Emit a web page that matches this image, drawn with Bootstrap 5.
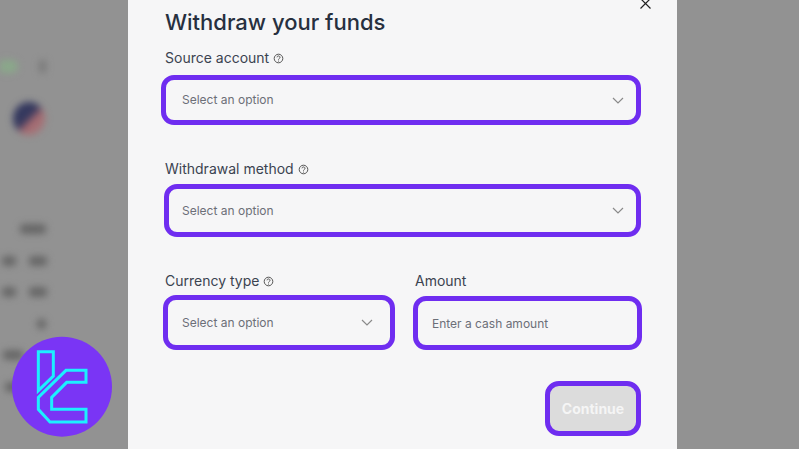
<!DOCTYPE html>
<html lang="en">
<head>
<meta charset="utf-8">
<title>Withdraw your funds</title>
<link href="https://cdn.jsdelivr.net/npm/bootstrap@5.3.0/dist/css/bootstrap.min.css" rel="stylesheet">
<style>
html,body{height:449px;overflow:hidden;margin:0}
body{background:#929292;font-family:Inter,"Liberation Sans",sans-serif}
.stage{height:449px;position:relative;overflow:hidden}
.behind{width:128px;flex:none;filter:blur(3.5px);padding-top:60px}
.smudge{height:10px;background:#676767;border-radius:4px;flex:none}
.srow{height:31.5px;padding-top:4px;display:flex}
.pill-g{width:18px;height:13px;background:#8aa88a;border-radius:0 7px 7px 0}
.pill-s{width:7px;height:13px;background:#7a7a7a;border-radius:3px;margin-left:21px}
.flag{width:32px;height:33px;border-radius:50%;margin:29px 0 85px 13px;background:linear-gradient(135deg,#34385e 45%,#a56a70 60%,#a57a7e)}
.w26{width:26px;margin-left:20px}.w15{width:14px;margin-left:2px}.w18{width:18px;margin-left:13px}.w10{width:9px;margin-left:37px}.w24{width:20px;margin-left:3px}.w16{width:16px;margin-left:5px}
.sheet{width:549px;flex:none;background:#f6f6f7;position:relative;padding:0 36px 0 33px;color:#2a3441}
.close-x{position:absolute;left:511px;top:-3px;width:13px;height:13px;background:none;border:0;padding:0}
.close-x svg{display:block}
.ttl{font-size:22px;font-weight:500;line-height:28px;margin:8px 0 0 4px;color:#27303f}
.lbl{font-size:14px;line-height:18px;color:#3b4350;display:flex;align-items:center;gap:4px;margin:0 0 0 4px;font-weight:400}
.lbl svg{display:block}
.src-lbl{margin-top:13px}
.wd-lbl{margin-top:35px}
.fbox{border:5px solid #6f2df0;border-radius:13px;background:#f6f6f7;color:#6c6f78;font-size:12px;display:flex;align-items:center;justify-content:space-between;box-shadow:none}
.fbox:focus{background:#f6f6f7;border-color:#6f2df0;box-shadow:none}
.fbox::placeholder{color:#6c6f78;opacity:1}
.f1{height:50px;padding:0 12px 0 16px;margin-top:8px}
.f2{height:53px;padding:0 12px 0 13px;margin:6px 0 0 3px}
.trio{display:grid;grid-template-columns:232px 229px;column-gap:18px;margin:35px 0 0 2px}
.trio .lbl{margin-left:2px}
.f3{height:55px;padding:0 17px 0 14px;margin-top:5px}
.f4{height:54px;padding:0 14px;margin-top:6px;width:229px}
.btn-wrap{display:flex;justify-content:flex-end;margin:31px 0 0}
.go{width:96px;height:55px;border:5px solid #6f2df0;border-radius:14px;background:#dcdcdc;color:#f5f5f5;font-size:14px;font-weight:700;padding:0}
.go:disabled{background:#dcdcdc;border-color:#6f2df0;color:#f5f5f5;opacity:1}
.badge-logo{position:absolute;left:0;top:320px;width:129px;height:129px}
</style>
</head>
<body>
<div class="stage d-flex">
  <div class="behind">
    <div class="d-flex align-items-center"><div class="pill-g"></div><div class="pill-s"></div></div>
    <div class="flag"></div>
    <div class="srow"><div class="smudge w26"></div></div>
    <div class="srow"><div class="smudge w15"></div><div class="smudge w18"></div></div>
    <div class="srow"><div class="smudge w15"></div><div class="smudge w18"></div></div>
    <div class="srow"><div class="smudge w10"></div></div>
    <div class="srow"><div class="smudge w24"></div></div>
    <div class="srow"><div class="smudge w16"></div></div>
  </div>
  <div class="sheet">
    <button class="close-x" type="button" aria-label="Close"><svg width="13" height="13" viewBox="0 0 13 13"><path d="M1.5 1.5 11.5 11.5M11.5 1.5 1.5 11.5" stroke="#222" stroke-width="1.2" fill="none"/></svg></button>
    <h1 class="ttl">Withdraw your funds</h1>
    <label class="lbl src-lbl">Source account
      <svg width="11" height="11" viewBox="0 0 11 11"><circle cx="5.5" cy="5.5" r="4.3" fill="none" stroke="#444" stroke-width=".9"/><path d="M4 4.3a1.5 1.4 0 1 1 2.2 1.3c-.5.3-.7.5-.7 1" fill="none" stroke="#444" stroke-width=".9"/><circle cx="5.5" cy="8" r=".55" fill="#444"/></svg>
    </label>
    <div class="fbox f1"><span>Select an option</span>
      <svg width="12" height="7" viewBox="0 0 12 7"><path d="M1 1 6 6 11 1" fill="none" stroke="#8a8a8a" stroke-width="1.2"/></svg></div>
    <label class="lbl wd-lbl">Withdrawal method
      <svg width="11" height="11" viewBox="0 0 11 11"><circle cx="5.5" cy="5.5" r="4.3" fill="none" stroke="#444" stroke-width=".9"/><path d="M4 4.3a1.5 1.4 0 1 1 2.2 1.3c-.5.3-.7.5-.7 1" fill="none" stroke="#444" stroke-width=".9"/><circle cx="5.5" cy="8" r=".55" fill="#444"/></svg>
    </label>
    <div class="fbox f2"><span>Select an option</span>
      <svg width="12" height="7" viewBox="0 0 12 7"><path d="M1 1 6 6 11 1" fill="none" stroke="#8a8a8a" stroke-width="1.2"/></svg></div>
    <div class="trio">
      <div>
        <label class="lbl">Currency type
          <svg width="11" height="11" viewBox="0 0 11 11"><circle cx="5.5" cy="5.5" r="4.3" fill="none" stroke="#444" stroke-width=".9"/><path d="M4 4.3a1.5 1.4 0 1 1 2.2 1.3c-.5.3-.7.5-.7 1" fill="none" stroke="#444" stroke-width=".9"/><circle cx="5.5" cy="8" r=".55" fill="#444"/></svg>
        </label>
        <div class="fbox f3"><span>Select an option</span>
          <svg width="12" height="7" viewBox="0 0 12 7"><path d="M1 1 6 6 11 1" fill="none" stroke="#8a8a8a" stroke-width="1.2"/></svg></div>
      </div>
      <div>
        <label class="lbl">Amount</label>
        <input class="fbox f4 form-control" type="text" placeholder="Enter a cash amount">
      </div>
    </div>
    <div class="btn-wrap"><button class="go btn" type="button" disabled>Continue</button></div>
  </div>
</div>
<svg class="badge-logo" viewBox="0 0 387 387" aria-hidden="true">
  <circle cx="186" cy="200" r="150" fill="#7a35f5"/>
  <g fill="none" stroke="#1cf0ff" stroke-width="9" stroke-linejoin="miter">
    <path d="M115 95H160V168L115 212Z"/>
    <path d="M198 151H258V187H200L155 232V268H258V306H150L115 268V232Z"/>
  </g>
</svg>
<script src="https://cdn.jsdelivr.net/npm/bootstrap@5.3.0/dist/js/bootstrap.bundle.min.js"></script>
</body>
</html>
